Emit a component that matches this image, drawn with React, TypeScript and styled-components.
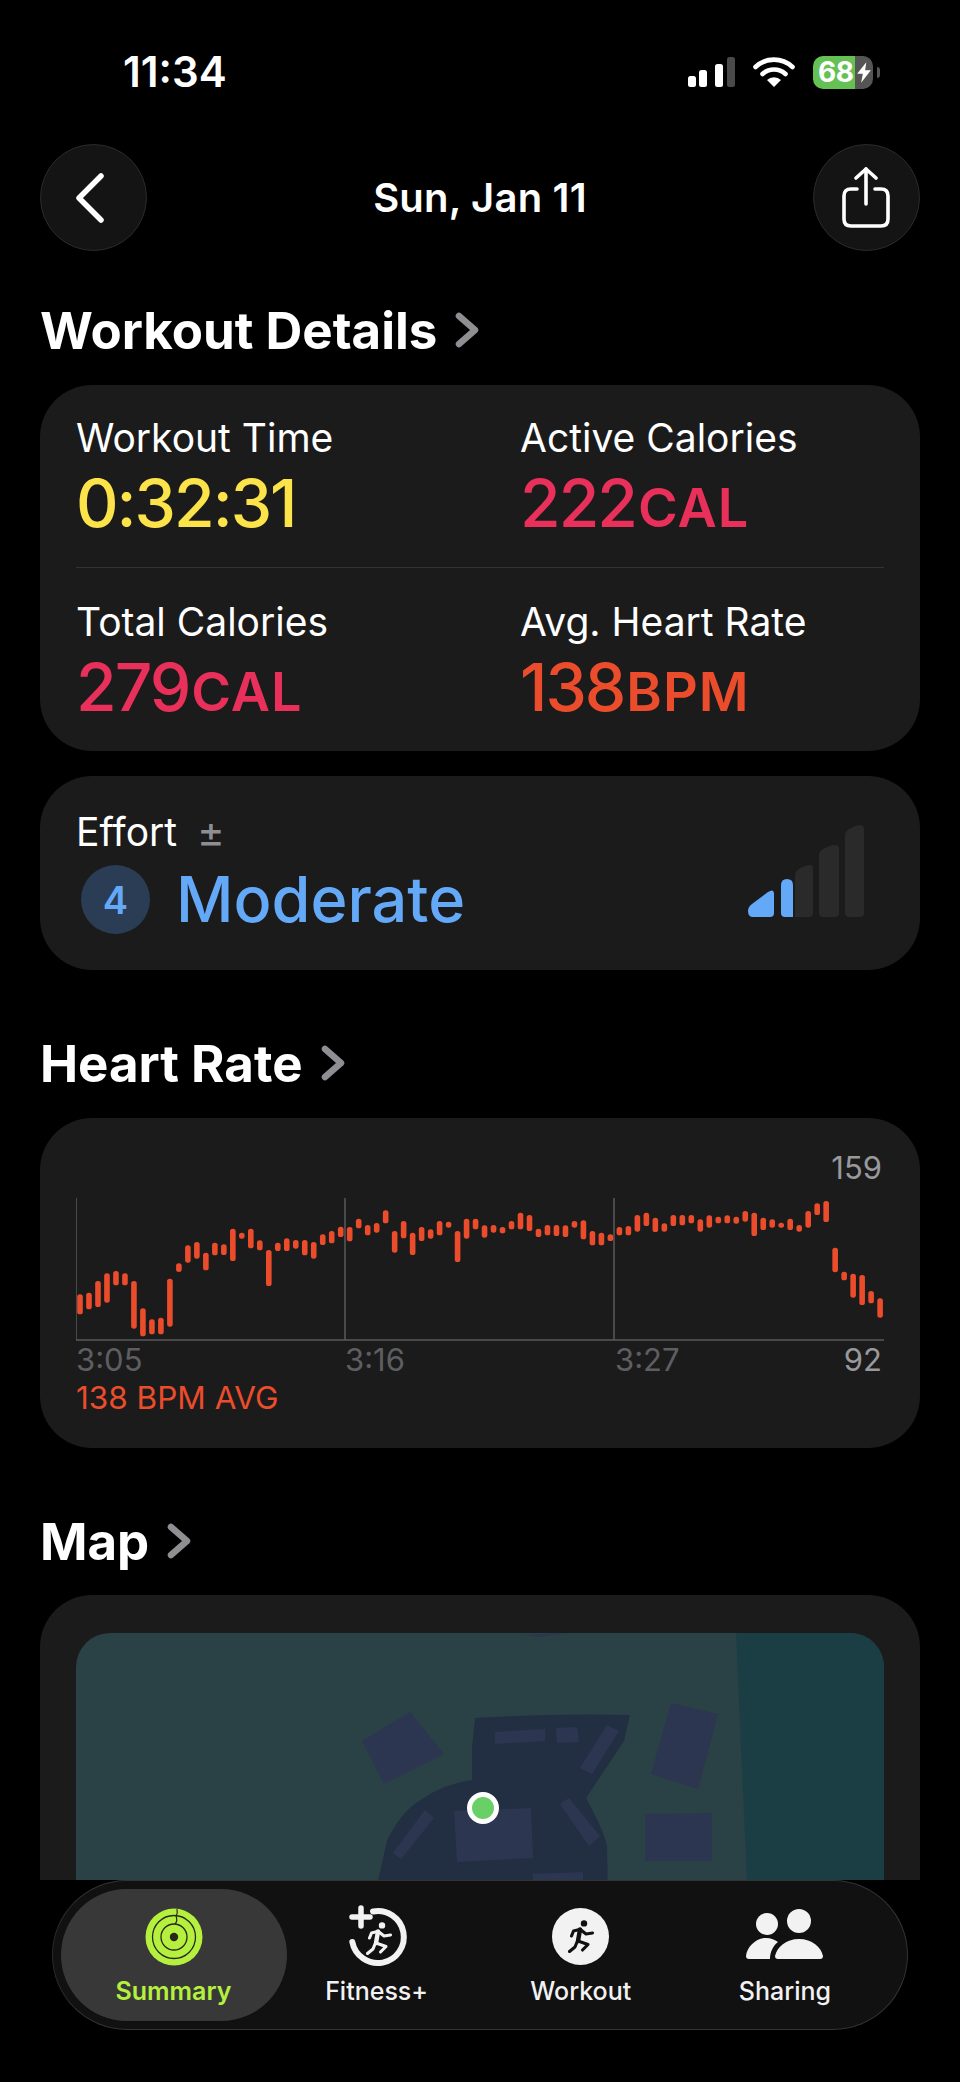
// App.tsx - workout summary screen
import styled, { createGlobalStyle } from "styled-components";

const GlobalStyle = createGlobalStyle`
  html, body {
    margin: 0;
    padding: 0;
    background: #000;
  }
  * {
    box-sizing: border-box;
  }
`;

const Page = styled.div`
  width: 960px;
  height: 2082px;
  background: #000;
  color: #fff;
  font-family: Inter, "Liberation Sans", sans-serif;
  overflow: hidden;
`;

const Content = styled.div`
  height: 1880px;
  padding: 0 40px;
  overflow: hidden;
`;

// Barre de statut
const StatusBar = styled.div`
  height: 144px;
  padding: 48px 0 0 83px;
  display: flex;
  justify-content: space-between;
  align-items: flex-start;
`;

const Clock = styled.div`
  font-size: 42px;
  font-weight: 600;
  line-height: 48px;
`;

const StatusIcons = styled.div`
  display: flex;
  align-items: center;
  gap: 18px;
  height: 48px;
  padding-right: 47px;
`;

const Battery = styled.div`
  position: relative;
  width: 60px;
  height: 33px;
  border-radius: 10px;
  background: linear-gradient(to right, #66c155 70%, #555 70%);
  display: flex;
  align-items: center;
  padding-left: 5px;
  font-size: 28px;
  font-weight: 700;
  letter-spacing: -0.5px;

  &::after {
    content: "";
    position: absolute;
    right: -7px;
    top: 11px;
    width: 3px;
    height: 11px;
    border-radius: 0 3px 3px 0;
    background: #555;
  }
`;

const Bolt = styled.svg`
  position: absolute;
  left: 43px;
  top: 6px;
`;

// En-tete avec les deux boutons ronds
const TopBar = styled.div`
  height: 107px;
  display: flex;
  align-items: center;
  justify-content: space-between;
`;

const RoundButton = styled.div<{ $nudge?: number }>`
  width: 107px;
  height: 107px;
  border-radius: 50%;
  background: #141414;
  border: 1.5px solid #2b2b2b;
  display: flex;
  align-items: center;
  justify-content: center;
  padding-right: ${({ $nudge }) => $nudge ?? 0}px;
`;

const TopTitle = styled.div`
  font-size: 40px;
  font-weight: 600;
  letter-spacing: 0.2px;
`;

const SectionHeading = styled.div<{ $top: number; $bottom: number }>`
  display: flex;
  align-items: center;
  gap: 18px;
  height: 56px;
  margin-top: ${({ $top }) => $top}px;
  margin-bottom: ${({ $bottom }) => $bottom}px;
  font-size: 51px;
  font-weight: 700;
`;

const Card = styled.div`
  width: 880px;
  background: #1b1b1b;
  border-radius: 52px;
`;

const DetailsCard = styled(Card)`
  padding: 33px 36px 31px;
`;

const MetricRow = styled.div`
  display: grid;
  grid-template-columns: 444px 1fr;
`;

const Metric = styled.div`
  display: flex;
  flex-direction: column;
  gap: 12px;
`;

const MetricLabel = styled.div`
  font-size: 39px;
  line-height: 40px;
  font-weight: 400;
`;

const MetricValue = styled.div<{ $color: string }>`
  color: ${({ $color }) => $color};
  font-size: 66px;
  line-height: 66px;
  font-weight: 500;
  letter-spacing: -2px;
`;

const Unit = styled.span`
  font-size: 54px;
  line-height: 1;
  font-weight: 600;
  letter-spacing: 1px;
  margin-left: 2px;
`;

const Divider = styled.div`
  height: 1px;
  background: #333;
  margin: 31px 0 34px;
`;

const EffortCard = styled(Card)`
  margin-top: 25px;
  height: 194px;
  padding: 36px 54px 36px 36px;
  display: flex;
  justify-content: space-between;
  align-items: flex-end;
`;

const EffortLabel = styled.div`
  display: flex;
  align-items: center;
  gap: 20px;
  font-size: 39px;
  line-height: 40px;
`;

const PlusMinus = styled.span`
  color: #8e8e93;
  font-size: 42px;
  line-height: 36px;
`;

const EffortRow = styled.div`
  display: flex;
  align-items: center;
  gap: 26px;
  margin: 13px 0 0 5px;
`;

const EffortBadge = styled.div`
  width: 69px;
  height: 69px;
  border-radius: 50%;
  background: #2b3d55;
  color: #64a8f8;
  font-size: 38px;
  font-weight: 600;
  display: flex;
  align-items: center;
  justify-content: center;
`;

const EffortText = styled.div`
  color: #64a8f8;
  font-size: 63px;
  line-height: 69px;
  font-weight: 500;
`;

const EffortBars = styled.svg`
  margin-bottom: 17px;
`;

const ChartCard = styled(Card)`
  height: 330px;
  padding: 33px 36px 0;
`;

const MaxLabel = styled.div`
  text-align: right;
  color: #98989d;
  font-size: 31px;
  line-height: 34px;
  padding-right: 2px;
  margin-bottom: 7px;
`;

const ChartSvg = styled.svg`
  display: block;
`;

const AxisRow = styled.div`
  display: grid;
  grid-template-columns: 269px 270px 1fr auto;
  padding: 0 2px 0 0;
  height: 36px;
  font-size: 31px;
  line-height: 36px;
`;

const AxisTime = styled.span`
  color: #5e5e62;
`;

const AxisMin = styled.span`
  color: #98989d;
`;

const AvgLabel = styled.div`
  color: #eb4d2c;
  font-size: 31.5px;
  line-height: 38px;
  margin-top: 1px;
`;

const MapCard = styled(Card)`
  height: 400px;
  padding: 38px 36px 0;
`;

const MapFrame = styled.div`
  position: relative;
  height: 362px;
  border-radius: 34px;
  overflow: hidden;
  background: #2a4146;
`;

const MapPin = styled.div`
  position: absolute;
  left: 391px;
  top: 159px;
  width: 32px;
  height: 32px;
  border-radius: 50%;
  background: #69cf67;
  border: 5px solid #fff;
`;

// Barre d'onglets en bas
const TabBar = styled.div`
  width: 856px;
  height: 150px;
  margin-left: 52px;
  border-radius: 75px;
  background: #111;
  border: 1.5px solid #333;
  border-left-color: #2a2a2a;
  padding: 7.5px 20px 7.5px 7.5px;
  display: flex;
`;

const Tab = styled.div<{ $active?: boolean }>`
  flex: ${({ $active }) => ($active ? "0 0 226px" : "1 1 0")};
  margin-right: ${({ $active }) => ($active ? "-12px" : "0")};
  height: 132px;
  border-radius: 66px;
  background: ${({ $active }) => ($active ? "#383838" : "transparent")};
  color: ${({ $active }) => ($active ? "#b6f03f" : "#f2f2f2")};
  display: flex;
  flex-direction: column;
  align-items: center;
  padding-top: 19px;
  font-size: 25px;
  line-height: 30px;
  font-weight: ${({ $active }) => ($active ? 600 : 500)};
`;

const TabIcon = styled.div`
  position: relative;
  width: 120px;
  height: 58px;
  margin-bottom: 10px;
  display: flex;
  align-items: center;
  justify-content: center;
`;

const WorkoutDisc = styled.div`
  width: 57px;
  height: 57px;
  border-radius: 50%;
  background: #f2f2f2;
  color: #111;
  display: flex;
  align-items: center;
  justify-content: center;
`;

const RunnerOverlay = styled.div`
  position: absolute;
  left: 49px;
  top: 14px;
  color: #f2f2f2;
  display: flex;
`;

const FitnessArc = styled.svg`
  position: absolute;
  left: 22px;
  top: -5px;
`;

const Chevron = () => (
  <svg width="24" height="36" viewBox="0 0 24 36" fill="none">
    <path d="M4 4 L20 18 L4 32" stroke="#8e8e93" strokeWidth="6.5" strokeLinecap="round" strokeLinejoin="round" />
  </svg>
);

// Silhouette qui court, dessinee au trait
const Runner = () => (
  <svg width="26" height="33" viewBox="0 0 26 33" fill="none" stroke="currentColor" strokeWidth="3.1" strokeLinecap="round" strokeLinejoin="round">
    <circle cx="16" cy="3.4" r="3.2" fill="currentColor" stroke="none" />
    <path d="M12 9.5 L10 21" strokeWidth="4.4" />
    <path d="M13 10 L18 14 L24.5 13" />
    <path d="M11.5 9.5 L5.5 11 L3.5 16" />
    <path d="M10 21 L20 24.5 L14.5 30" />
    <path d="M9 22 L7 27 L1.5 31.5" />
  </svg>
);

// [haut, bas] de chaque barre, releves sur la capture
const HEART_BARS: [number, number][] = [
  [580, 640], [575, 625], [540, 618], [517, 605], [510, 553], [517, 553], [540, 683], [622, 706], [655, 700],
  [650, 700], [533, 677], [487, 513], [433, 485], [423, 473], [455, 508], [425, 463], [430, 462], [383, 480],
  [395, 413], [383, 442], [418, 448], [447, 555], [425, 450], [412, 450], [417, 443], [417, 463], [423, 473],
  [400, 432], [390, 427], [377, 408], [378, 421], [353, 382], [372, 403], [366, 395], [328, 367], [390, 455],
  [360, 412], [395, 462], [378, 420], [385, 413], [360, 403], [362, 380], [390, 483], [353, 413], [353, 385],
  [373, 410], [372, 395], [378, 397], [360, 385], [335, 385], [342, 390], [383, 408], [372, 403], [372, 405],
  [373, 408], [360, 380], [358, 415], [390, 433], [395, 433], [400, 420], [378, 403], [375, 403], [342, 392],
  [335, 375], [350, 393], [367, 392], [342, 375], [342, 373], [342, 367], [355, 392], [343, 380], [347, 367],
  [343, 367], [347, 368], [330, 362], [335, 405], [350, 387], [355, 380], [365, 380], [353, 387], [372, 392],
  [330, 380], [307, 342], [300, 363], [440, 514], [512, 538], [518, 590], [522, 612], [570, 607], [592, 650],
];

const HeartChart = () => (
  <ChartSvg width="808" height="150" viewBox="76 1191 808 150">
    <g stroke="#5a5a5a" strokeWidth="1.5">
      <line x1="76" y1="1197" x2="76" y2="1339" />
      <line x1="345" y1="1197" x2="345" y2="1339" />
      <line x1="614" y1="1197" x2="614" y2="1339" />
      <line x1="75" y1="1339" x2="884" y2="1339" />
    </g>
    {HEART_BARS.map(([top, bottom], i) => (
      <rect
        key={i}
        x={80 + i * 8.99 - 2.8}
        y={1100 + top / 3}
        width="5.6"
        height={(bottom - top) / 3}
        rx="2.6"
        fill="#eb4d2c"
      />
    ))}
  </ChartSvg>
);

const MapArt = () => (
  <svg width="808" height="362" viewBox="76 1632 808 362" style={{ display: "block" }}>
    <polygon points="736,1632 884,1632 884,1994 752,1994" fill="#1b3e45" />
    <path
      d="M475 1717 Q560 1712 630 1714 L624 1740 L586 1797 Q604 1830 607 1845 L610 1994 L375 1994 L378 1880 L387 1840 Q400 1812 419 1800 Q445 1782 472 1779 L472 1747 Z"
      fill="#222f42"
    />
    <g fill="#2c3650">
      <polygon points="410,1711 444,1753 384,1783 362,1740" />
      <polygon points="671,1702 718,1713 698,1788 651,1773" />
      <polygon points="645,1813 712,1812 712,1860 645,1860" />
      <polygon points="495,1731 545,1728 545,1740 495,1743" />
      <polygon points="556,1727 577,1726 579,1741 557,1742" />
      <polygon points="607,1724 619,1730 592,1773 580,1767" />
      <polygon points="454,1810 531,1807 533,1857 457,1861" />
      <polygon points="569,1797 600,1835 589,1845 560,1803" />
      <polygon points="425,1809 434,1817 401,1858 393,1852" />
      <polygon points="533,1873 583,1871 583,1900 533,1900" />
      <polygon points="525,1634 566,1632 540,1636" />
    </g>
  </svg>
);

const SummaryRings = () => (
  <svg width="58" height="58" viewBox="0 0 58 58" fill="none">
    <circle cx="29" cy="29" r="28.5" fill="#b6f03f" />
    <g stroke="#26291c" strokeWidth="1.3">
      <circle cx="29" cy="29" r="21.5" />
      <circle cx="29" cy="29" r="13" />
    </g>
    <circle cx="29" cy="29" r="4.2" fill="#26291c" />
    <path d="M32 1 Q33 5 31 8 M31 8 Q33 13 30 16" stroke="#26291c" strokeWidth="1.2" />
  </svg>
);

const FitnessRing = () => (
  <>
    <FitnessArc width="70" height="66" viewBox="0 0 70 66" fill="none">
      <path d="M34 8.5 A 26 26 0 1 1 13.3 39" stroke="#f2f2f2" strokeWidth="6" strokeLinecap="round" />
      <path d="M22 5 V23 M13 14 H31" stroke="#f2f2f2" strokeWidth="5.5" strokeLinecap="round" />
    </FitnessArc>
    <RunnerOverlay>
      <Runner />
    </RunnerOverlay>
  </>
);

const SharingIcon = () => (
  <svg width="80" height="56" viewBox="746 1912 80 56" fill="#f2f2f2">
    <circle cx="768" cy="1927" r="11" />
    <circle cx="800" cy="1924" r="12" />
    <path d="M747 1959 C748 1950 757 1941 767 1941 C772 1941 776 1943 779 1945 C774 1949 771 1955 771 1962 L750 1962 C748 1962 747 1961 747 1959 Z" />
    <path d="M776 1959 C778 1950 787 1942 800 1942 C813 1942 822 1950 824 1959 C824 1961 823 1962 821 1962 L779 1962 C777 1962 776 1961 776 1959 Z" />
  </svg>
);

export default function App() {
  return (
    <Page>
      <GlobalStyle />
      <Content>
        <StatusBar>
          <Clock>11:34</Clock>
          <StatusIcons>
            <svg width="47" height="30" viewBox="0 0 47 30">
              <rect x="0" y="19" width="8" height="11" rx="2.5" fill="#fff" />
              <rect x="11" y="13" width="8" height="17" rx="2.5" fill="#fff" />
              <rect x="27" y="7" width="8" height="23" rx="2.5" fill="#fff" />
              <rect x="39" y="0" width="8" height="30" rx="2.5" fill="#4a4a4a" />
            </svg>
            <svg width="42" height="30" viewBox="0 0 42 30" fill="none">
              <path d="M2.5 10 A 27 27 0 0 1 39.5 10" stroke="#fff" strokeWidth="4.6" strokeLinecap="round" />
              <path d="M9.5 17 A 17 17 0 0 1 32.5 17" stroke="#fff" strokeWidth="4.6" strokeLinecap="round" />
              <path d="M21 30 L14 23 A 10 10 0 0 1 28 23 Z" fill="#fff" />
            </svg>
            <Battery>
              68
              <Bolt width="16" height="21" viewBox="0 0 14 18">
                <path d="M9 0 L1 10 H6 L4.5 18 L13 7 H8 Z" fill="#fff" />
              </Bolt>
            </Battery>
          </StatusIcons>
        </StatusBar>

        <TopBar>
          <RoundButton $nudge={8}>
            <svg width="34" height="52" viewBox="0 0 34 52" fill="none">
              <path d="M28 4 L6 26 L28 48" stroke="#fff" strokeWidth="5.5" strokeLinecap="round" strokeLinejoin="round" />
            </svg>
          </RoundButton>
          <TopTitle>Sun, Jan 11</TopTitle>
          <RoundButton>
            <svg width="50" height="62" viewBox="0 0 50 62" fill="none" stroke="#fff" strokeWidth="3.6" strokeLinecap="round" strokeLinejoin="round">
              <path d="M25 2 V37" />
              <path d="M15 11 L25 2 L35 11" />
              <path d="M16 22 H10 Q3 22 3 29 V52 Q3 59 10 59 H40 Q47 59 47 52 V29 Q47 22 40 22 H34" />
            </svg>
          </RoundButton>
        </TopBar>

        <SectionHeading $top={51} $bottom={27}>
          Workout Details <Chevron />
        </SectionHeading>

        <DetailsCard>
          <MetricRow>
            <Metric>
              <MetricLabel>Workout Time</MetricLabel>
              <MetricValue $color="#fce34a">0:32:31</MetricValue>
            </Metric>
            <Metric>
              <MetricLabel>Active Calories</MetricLabel>
              <MetricValue $color="#e8305a">
                222<Unit>CAL</Unit>
              </MetricValue>
            </Metric>
          </MetricRow>
          <Divider />
          <MetricRow>
            <Metric>
              <MetricLabel>Total Calories</MetricLabel>
              <MetricValue $color="#e8305a">
                279<Unit>CAL</Unit>
              </MetricValue>
            </Metric>
            <Metric>
              <MetricLabel>Avg. Heart Rate</MetricLabel>
              <MetricValue $color="#eb4d2c">
                138<Unit>BPM</Unit>
              </MetricValue>
            </Metric>
          </MetricRow>
        </DetailsCard>

        <EffortCard>
          <div>
            <EffortLabel>
              Effort <PlusMinus>±</PlusMinus>
            </EffortLabel>
            <EffortRow>
              <EffortBadge>4</EffortBadge>
              <EffortText>Moderate</EffortText>
            </EffortRow>
          </div>
          <EffortBars width="120" height="92" viewBox="746 826 120 92">
            <path d="M748 912 Q748 908 752 905 L768 893 Q774 889 774 895 V914 Q774 918 770 918 H753 Q748 918 748 912 Z" fill="#64a8f8" />
            <path d="M781 886 Q781 880 787 880 Q793 880 793 886 V918 H785 Q781 918 781 914 Z" fill="#64a8f8" />
            <path d="M795 876 Q795 873 799 870 Q805 866 811 866 Q813 866 813 870 V914 Q813 918 809 918 H795 Z" fill="#2a2a2a" />
            <path d="M819 856 Q819 852 825 849 Q830 846 835 846 Q839 846 839 850 V914 Q839 918 835 918 H823 Q819 918 819 914 Z" fill="#2a2a2a" />
            <path d="M845 836 Q845 832 851 829 Q856 826 860 826 Q864 826 864 830 V914 Q864 918 860 918 H849 Q845 918 845 914 Z" fill="#2a2a2a" />
          </EffortBars>
        </EffortCard>

        <SectionHeading $top={65} $bottom={27}>
          Heart Rate <Chevron />
        </SectionHeading>

        <ChartCard>
          <MaxLabel>159</MaxLabel>
          <HeartChart />
          <AxisRow>
            <AxisTime>3:05</AxisTime>
            <AxisTime>3:16</AxisTime>
            <AxisTime>3:27</AxisTime>
            <AxisMin>92</AxisMin>
          </AxisRow>
          <AvgLabel>138 BPM AVG</AvgLabel>
        </ChartCard>

        <SectionHeading $top={65} $bottom={26}>
          Map <Chevron />
        </SectionHeading>

        <MapCard>
          <MapFrame>
            <MapArt />
            <MapPin />
          </MapFrame>
        </MapCard>
      </Content>

      <TabBar>
        <Tab $active>
          <TabIcon>
            <SummaryRings />
          </TabIcon>
          Summary
        </Tab>
        <Tab>
          <TabIcon>
            <FitnessRing />
          </TabIcon>
          Fitness+
        </Tab>
        <Tab>
          <TabIcon>
            <WorkoutDisc>
              <Runner />
            </WorkoutDisc>
          </TabIcon>
          Workout
        </Tab>
        <Tab>
          <TabIcon>
            <SharingIcon />
          </TabIcon>
          Sharing
        </Tab>
      </TabBar>
    </Page>
  );
}
